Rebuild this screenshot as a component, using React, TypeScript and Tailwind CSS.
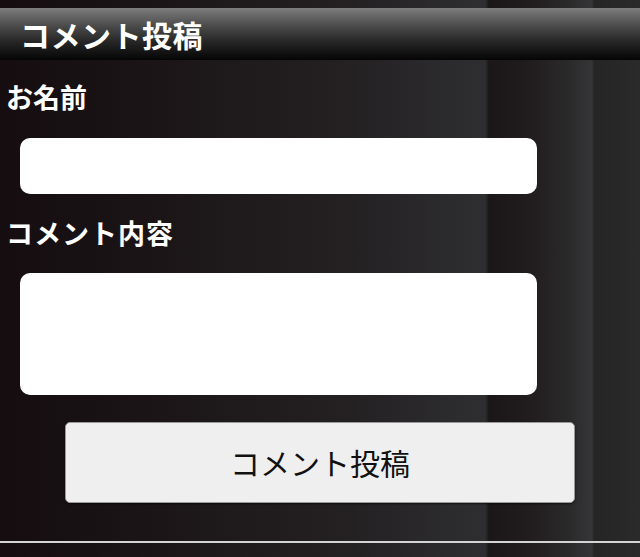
import { useState } from 'react'

const jp = { fontFamily: '"Noto Sans CJK JP", "Noto Sans", sans-serif' }

export default function App() {
  const [name, setName] = useState('')
  const [body, setBody] = useState('')

  return (
    <div
      style={jp}
      className="w-[640px] h-[557px] overflow-hidden flex flex-col bg-[linear-gradient(to_right,#150d0f_0%,#1b1517_25%,#242123_55%,#2e2e30_75.8%,#1b1617_76.4%,#201b1c_82%,#2b2a2b_89%,#353537_92.5%,#262526_92.8%,#2a2a2a_100%)]"
    >
      <div className="h-[8px] shrink-0" />
      <div className="h-[52px] shrink-0 flex items-center px-[20px] bg-[linear-gradient(to_bottom,#7d7d7d_0%,#4a4a4a_35%,#262626_65%,#050505_100%)]">
        <h1 className="text-[30px] leading-none font-bold tracking-[0.5px] text-white">コメント投稿</h1>
      </div>

      <label className="mt-[20px] ml-[6px] text-[27px] leading-[34px] font-bold text-white">お名前</label>
      <input
        value={name}
        onChange={(e) => setName(e.target.value)}
        className="mt-[24px] ml-[20px] w-[517px] h-[56px] shrink-0 rounded-[10px] bg-white outline-none px-3 text-[20px]"
      />

      <label className="mt-[22px] ml-[6px] text-[27px] leading-[34px] font-bold tracking-[1px] text-white">コメント内容</label>
      <textarea
        value={body}
        onChange={(e) => setBody(e.target.value)}
        className="mt-[23px] ml-[20px] w-[517px] h-[122px] shrink-0 rounded-[10px] bg-white outline-none resize-none p-3 text-[20px]"
      />

      <button className="mt-[27px] ml-[65px] w-[510px] h-[81px] shrink-0 rounded-[5px] border border-[#9a9a9a] bg-[#efefef] text-[30px] text-[#111] shadow-[0_1px_2px_rgba(0,0,0,0.6)]">
        コメント投稿
      </button>

      <div className="mt-[38px] h-[2px] shrink-0 bg-[#d4d4d4]" />
    </div>
  )
}
